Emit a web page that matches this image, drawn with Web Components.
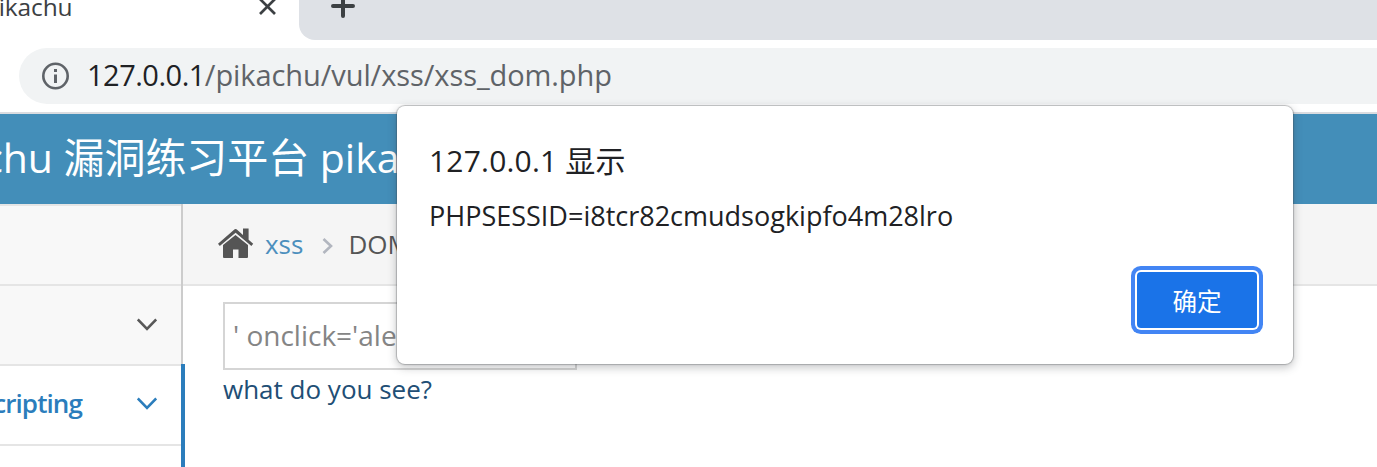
<!DOCTYPE html>
<html lang="zh-CN">
<head>
<meta charset="utf-8">
<title>pikachu</title>
<style>
html,body{margin:0;height:100%;overflow:hidden;background:#fff}
</style>
</head>
<body>
<browser-window>
  <tab-strip slot="tabs">pikachu</tab-strip>
  <address-bar slot="toolbar" host="127.0.0.1" path="/pikachu/vul/xss/xss_dom.php"></address-bar>
  <site-header>Pikachu 漏洞练习平台 pika</site-header>
  <site-layout>
    <menu-item slot="menu" blank></menu-item>
    <menu-item slot="menu" arrow></menu-item>
    <menu-item slot="menu" arrow active>Cross-Site Scripting</menu-item>
    <menu-item slot="menu" open></menu-item>
    <bread-crumbs><span slot="link">xss</span><span>DOM</span></bread-crumbs>
    <dom-demo value="' onclick='ale">what do you see?</dom-demo>
  </site-layout>
  <alert-dialog slot="dialog"><span slot="title">127.0.0.1 显示</span><span>PHPSESSID=i8tcr82cmudsogkipfo4m28lro</span><span slot="ok">确定</span></alert-dialog>
</browser-window>
<script>
const define = (name, html, init) => customElements.define(name, class extends HTMLElement {
  constructor() {
    super();
    const t = document.createElement('template');
    t.innerHTML = html;
    this.attachShadow({mode: 'open'}).append(t.content.cloneNode(true));
  }
  connectedCallback() { if (init) init(this, this.shadowRoot); }
});

define('browser-window', `<style>
:host{display:flex;flex-direction:column;position:relative;width:1377px;height:467px;overflow:hidden;background:#fff;font-family:"Open Sans","Noto Sans CJK SC",sans-serif}
main{display:flex;flex-direction:column;flex:1;border-top:2px solid #dadce0;min-height:0}
</style><slot name="tabs"></slot><slot name="toolbar"></slot><main><slot></slot></main><slot name="dialog"></slot>`);

define('tab-strip', `<style>
:host{display:flex;height:40px;flex:none;background:#fff;color:#3c4043}
.tab{width:299px;display:flex;justify-content:space-between;overflow:hidden}
.name{font-size:24.5px;line-height:30px;margin:-8px 0 0 -16px;letter-spacing:-.15px}
.close{margin:-2px 23px 0 0}
.rest{flex:1;background:#dee1e6;border-bottom-left-radius:16px;padding-left:31px}
svg{display:block}
</style>
<div class="tab"><span class="name"><slot></slot></span>
<svg class="close" width="17" height="17" viewBox="0 0 17 17" stroke="#3c4043" stroke-width="2.7"><path d="M1 1 16 16M16 1 1 16"/></svg></div>
<div class="rest"><svg width="26" height="18" viewBox="0 0 26 18" stroke="#3c4043" stroke-width="4" stroke-linecap="round"><path d="M3 6H23M13 -4V16"/></svg></div>`);

define('address-bar', `<style>
:host{display:block;flex:none;box-sizing:border-box;height:72px;padding:8px 0 0 19px}
.field{height:56px;display:flex;align-items:center;box-sizing:border-box;background:#f1f3f4;border-radius:28px 0 0 28px;padding:0 0 3px 22px;font-size:29px;color:#5f6368;white-space:pre}
svg{flex:none;margin:3px 18px 0 0}
.host{color:#202124;letter-spacing:-.5px}.path{letter-spacing:-.08px}
</style><div class="field"><svg width="28" height="28" viewBox="0 0 28 28" fill="none" stroke="#5f6368"><circle cx="14.5" cy="14" r="12.2" stroke-width="2.6"/><path d="M14.5 12.5V21M14.5 7V10" stroke-width="3"/></svg><span class="host"></span><span class="path"></span></div>`,
(el, r) => { r.querySelector('.host').textContent = el.getAttribute('host'); r.querySelector('.path').textContent = el.getAttribute('path'); });

define('site-header', `<style>
:host{display:flex;flex:none;height:90px;background:#438eb9;color:#fff;font-size:41px;line-height:86px;white-space:nowrap}
span{margin-left:-96px;letter-spacing:-.05px}
</style><span><slot></slot></span>`);

define('site-layout', `<style>
:host{display:flex;flex:1;min-height:0}
nav{width:185px;flex:none;height:264px}
section{flex:1;display:flex;flex-direction:column;margin-left:-2px}
</style><nav><slot name="menu"></slot></nav><section><slot></slot></section>`);

define('menu-item', `<style>
:host{display:flex;box-sizing:border-box;width:183px;height:80px;padding-bottom:4px;border-right:2px solid #ccc;box-shadow:inset 0 -2px #e5e5e5;background:#f8f8f8;align-items:center;justify-content:flex-end;overflow:hidden;color:#585858;font-size:26px;font-weight:600;white-space:nowrap}
:host([blank]){height:82px;box-shadow:inset 0 2px #e5e5e5,inset 0 -2px #e5e5e5}
:host([active]){width:185px;height:82px;margin-top:-2px;border-right:4px solid #2b7dbc;background:#fff;color:#2b7dbc;box-shadow:inset 0 2px #e5e5e5,inset 0 -2px #e5e5e5}
:host([open]){width:185px;border-right:4px solid #2b7dbc;background:#fff}
span{letter-spacing:-.9px;margin-right:1px}
svg{display:none;margin:0 24px 0 54px;flex:none}
:host([arrow]) svg{display:block}
</style><span><slot></slot></span><svg width="20" height="13" viewBox="0 0 20 13" fill="none" stroke="currentColor" stroke-width="2.6"><path d="M.8 1.4 10 10.8 19.2 1.4"/></svg>`);

define('bread-crumbs', `<style>
:host{display:flex;flex:none;box-sizing:border-box;height:82px;align-items:center;background:#f5f5f5;border-bottom:2px solid #e5e5e5;padding-left:35px;font-size:26px;color:#555;white-space:nowrap}
.link{color:#4c8fbd;margin:-1px 0 0 11px}
.page{margin-top:-1px}
.sep{margin:4px 15px 0 19px}
.home{margin-top:-2px}
</style><svg class="home" width="36" height="30" viewBox="0 0 36 30" fill="#555"><path d="M17.5 7 30 17V29a1 1 0 0 1-1 1H20.5V21.5H15V30H6a1 1 0 0 1-1-1V17Z"/><path d="M25 .5H30.6V11.8L35.2 15.7 33.4 18 17.6 4.7 1.8 18 0 15.7 15.8 1.9Q17.6 .3 19.4 1.9L25 6.9Z"/></svg>
<span class="link"><slot name="link"></slot></span><svg class="sep" width="11" height="16" viewBox="0 0 11 16" fill="none" stroke="#b2b6bf" stroke-width="2.6"><path d="M1.5 1 9 8 1.5 15"/></svg><span class="page"><slot></slot></span>`);

define('dom-demo', `<style>
:host{display:block;padding:16px 0 0 40px;font-size:26px;color:#214e75}
.box{box-sizing:border-box;width:354px;height:68px;border:2px solid #d5d5d5;padding:0 8px;font-size:28px;line-height:62px;color:#858585;white-space:nowrap}
.note{line-height:38px}
</style><div class="box"></div><div class="note"><slot></slot></div>`,
(el, r) => { r.querySelector('.box').textContent = el.getAttribute('value'); });

define('alert-dialog', `<style>
:host{display:flex;flex-direction:column;box-sizing:border-box;position:absolute;left:397px;top:106px;width:896px;height:258px;border-radius:8px;background:#fff;box-shadow:0 0 1px 1px rgba(60,64,67,.3),0 3px 8px 1px rgba(60,64,67,.28);padding:32px 36px 36px 32px;color:#202124;white-space:nowrap}
.title{font-size:30px;line-height:46px;letter-spacing:.2px}
.msg{font-size:27px;line-height:36px;margin-top:14px}
.ok{margin-top:auto;align-self:flex-end;width:120px;height:56px;border-radius:4px;background:#1a73e8;color:#fff;box-shadow:0 0 0 2px #fff,0 0 0 6px #4285f4;font-size:24.5px;line-height:59px;text-align:center}
</style><div class="title"><slot name="title"></slot></div><div class="msg"><slot></slot></div><div class="ok"><slot name="ok"></slot></div>`);
</script>
</body>
</html>
